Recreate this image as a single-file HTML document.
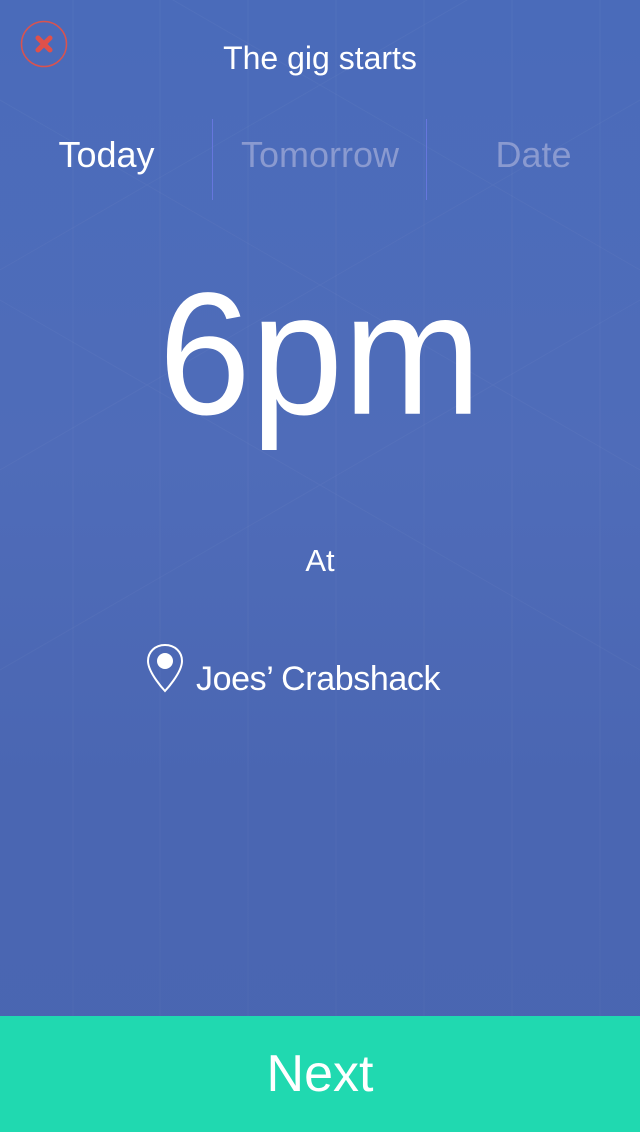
<!DOCTYPE html>
<html><head><meta charset="utf-8"><style>
html,body{margin:0;padding:0}
body{width:640px;height:1132px;position:relative;overflow:hidden;background:linear-gradient(180deg,#4a6bba 0%,#4f6cb9 40%,#4a66b2 70%,#4966b1 100%);font-family:"Liberation Sans",sans-serif;color:#fff}
.t{position:absolute;left:0;width:640px;text-align:center;white-space:nowrap}
.next{position:absolute;left:0;top:1016px;width:640px;height:116px;background:#20d9b0;text-align:center;line-height:116px;font-size:52px;color:#fff}
.div{position:absolute;top:119px;width:1px;height:81px;background:#6677dd}
</style></head><body>
<svg width="640" height="1016" style="position:absolute;left:0;top:0" stroke="#ffffff" stroke-opacity="0.035" fill="none">
<path d="M73 0V1016M160 0V1016M248 0V1016M336 0V1016M424 0V1016M512 0V1016M600 0V1016"/>
<path d="M0 100L640 470M0 300L640 670M0 -100L640 270M640 100L0 470M640 300L0 670M640 -100L0 270"/>
</svg>
<svg width="50" height="50" style="position:absolute;left:19px;top:20px" viewBox="0 0 50 50">
<circle cx="25" cy="24" r="22.5" fill="none" stroke="#d9534f" stroke-width="1.5"/>
<path d="M19 18L31 30M31 18L19 30" stroke="#e0504a" stroke-width="5" stroke-linecap="round"/>
</svg>
<div class="t" style="top:40px;font-size:32px">The gig starts</div>
<div style="position:absolute;left:0;top:134px;width:213px;text-align:center;font-size:36px">Today</div>
<div class="div" style="left:212px"></div>
<div style="position:absolute;left:213px;top:134px;width:214px;text-align:center;font-size:36px;color:#8a9ad0">Tomorrow</div>
<div class="div" style="left:426px"></div>
<div style="position:absolute;left:427px;top:134px;width:213px;text-align:center;font-size:36px;color:#8a9ad0">Date</div>
<div class="t" style="top:255px;font-size:166px;line-height:200px;transform:scaleY(1.05);transform-origin:center">6pm</div>
<div class="t" style="top:543px;font-size:31px">At</div>
<svg width="40" height="52" style="position:absolute;left:145px;top:643px" viewBox="0 0 40 52">
<path d="M20 2C10 2 3 9 3 18C3 30 20 48 20 48C20 48 37 30 37 18C37 9 30 2 20 2Z" fill="none" stroke="#fff" stroke-width="2"/>
<circle cx="20" cy="18" r="8" fill="#fff"/>
</svg>
<div style="position:absolute;left:196px;top:660px;font-size:34px;white-space:nowrap;letter-spacing:-0.4px">Joes’ Crabshack</div>
<div class="next">Next</div>
</body></html>
